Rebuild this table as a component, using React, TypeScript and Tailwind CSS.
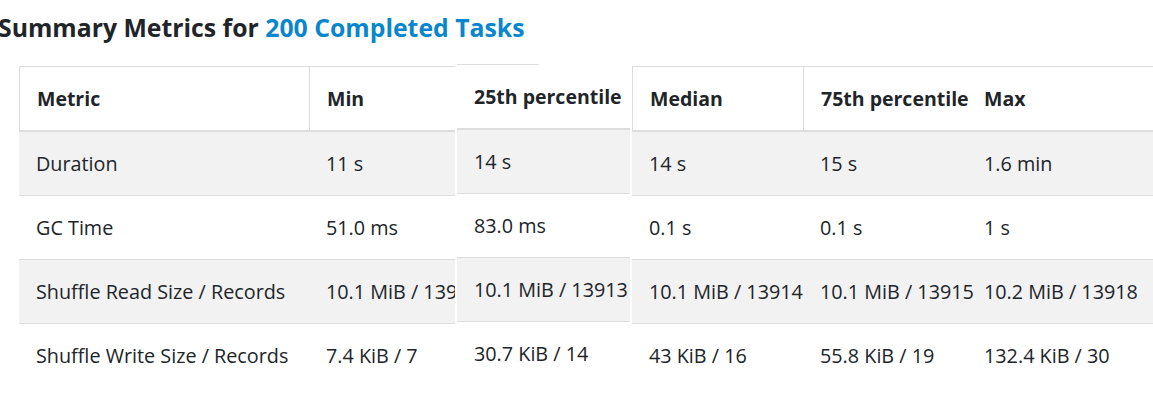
import React from 'react';

type Col = { head: string; width: string; headBorder?: boolean; clip?: boolean };

const metrics = ['Duration', 'GC Time', 'Shuffle Read Size / Records', 'Shuffle Write Size / Records'];

const values: Record<string, string[]> = {
  Min: ['11 s', '51.0 ms', '10.1 MiB / 13911', '7.4 KiB / 7'],
  '25th percentile': ['14 s', '83.0 ms', '10.1 MiB / 13913', '30.7 KiB / 14'],
  Median: ['14 s', '0.1 s', '10.1 MiB / 13914', '43 KiB / 16'],
  '75th percentile': ['15 s', '0.1 s', '10.1 MiB / 13915', '55.8 KiB / 19'],
  Max: ['1.6 min', '1 s', '10.2 MiB / 13918', '132.4 KiB / 30'],
};

function cellText(col: Col, row: number) {
  if (col.head === 'Metric') return metrics[row];
  return values[col.head][row];
}

// one slab of the table; the summary table is drawn in three of them
function Segment({ cols, className = '', topBorder = 'w-full' }: { cols: Col[]; className?: string; topBorder?: string }) {
  return (
    <div className={`flex flex-col ${className}`}>
      <div className={`h-px bg-[#dddddd] ${topBorder}`} />
      <div className="flex h-[65px] border-b-2 border-[#dddddd]">
        {cols.map((c) => (
          <div
            key={c.head}
            className={`${c.width} flex items-center pl-[17px] pt-[1px] whitespace-nowrap font-bold text-[19.5px] text-[#212529] ${c.headBorder ? 'border-l border-[#dddddd]' : ''} ${c.clip ? 'overflow-hidden' : ''}`}
          >
            {c.head}
          </div>
        ))}
      </div>
      {metrics.map((m, i) => (
        <div key={m} className={`flex ${i > 0 ? 'h-[64px] border-t border-[#dddddd]' : 'h-[63px]'} ${i % 2 === 0 ? 'bg-[#f2f2f2]' : 'bg-white'}`}>
          {cols.map((c) => (
            <div
              key={c.head}
              className={`${c.width} flex items-center pl-[17px] whitespace-nowrap text-[19.8px] text-[#212529] ${c.clip ? 'overflow-hidden' : ''}`}
            >
              {cellText(c, i)}
            </div>
          ))}
        </div>
      ))}
    </div>
  );
}

export default function App() {
  return (
    <div className="w-[1153px] h-[417px] overflow-hidden bg-white font-['Open_Sans',sans-serif]">
      <h4 className="h-[54px] pt-[9px] font-bold text-[24.8px] leading-[36px] text-[#212529] -ml-[2px] whitespace-nowrap">
        Summary Metrics for <a className="text-[#0a86cc]">200 Completed Tasks</a>
      </h4>
      <div className="flex mt-[12px] pl-[19px]">
        <Segment
          className="w-[436px]"
          cols={[
            { head: 'Metric', width: 'w-[290px]', headBorder: true, clip: true },
            { head: 'Min', width: 'w-[146px]', headBorder: true, clip: true },
          ]}
        />
        <div className="w-[2px]" />
        <Segment
          className="w-[173px] -mt-[2px]"
          topBorder="w-[82px]"
          cols={[{ head: '25th percentile', width: 'w-[173px]' }]}
        />
        <div className="w-[2px]" />
        <Segment
          className="flex-1 min-w-0"
          cols={[
            { head: 'Median', width: 'w-[171px]', headBorder: true, clip: true },
            { head: '75th percentile', width: 'w-[164px]', headBorder: true },
            { head: 'Max', width: 'flex-1', clip: true },
          ]}
        />
      </div>
    </div>
  );
}
